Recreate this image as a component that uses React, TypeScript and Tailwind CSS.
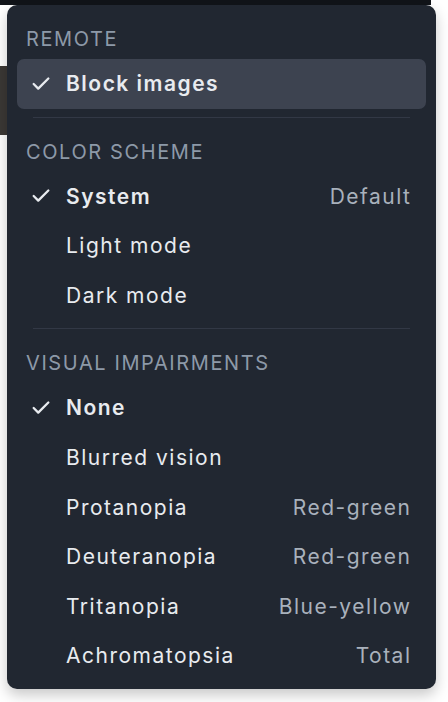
import { Check } from "lucide-react";

type Item = { label: string; hint?: string; checked?: boolean; active?: boolean };

const sections: { title: string; items: Item[] }[] = [
  {
    title: "Remote",
    items: [{ label: "Block images", checked: true, active: true }],
  },
  {
    title: "Color scheme",
    items: [
      { label: "System", hint: "Default", checked: true },
      { label: "Light mode" },
      { label: "Dark mode" },
    ],
  },
  {
    title: "Visual impairments",
    items: [
      { label: "None", checked: true },
      { label: "Blurred vision" },
      { label: "Protanopia", hint: "Red-green" },
      { label: "Deuteranopia", hint: "Red-green" },
      { label: "Tritanopia", hint: "Blue-yellow" },
      { label: "Achromatopsia", hint: "Total" },
    ],
  },
];

function MenuRow({ item }: { item: Item }) {
  return (
    <div
      className={`flex h-[49.6px] items-center rounded-[7px] pl-[13px] pr-4 ${
        item.active ? "bg-[#3d4350]" : ""
      }`}
    >
      <span className="flex w-[22px] justify-center text-[#e8ebef]">
        {item.checked && <Check size={22} strokeWidth={2.5} />}
      </span>
      <span
        className={`ml-[14px] flex-1 text-[21px] tracking-[1.5px] text-[#e8ebef] ${
          item.checked ? "font-semibold" : ""
        }`}
      >
        {item.label}
      </span>
      {item.hint && (
        <span className="-mr-[1.5px] text-[21px] tracking-[1.5px] text-[#a9b1bc]">
          {item.hint}
        </span>
      )}
    </div>
  );
}

export default function App() {
  return (
    <div className="relative h-[702px] w-[448px] overflow-hidden bg-white font-['Inter',sans-serif]">
      <div className="h-[5px] w-[431px] bg-[#111419]" />
      <div className="mt-[61px] h-[69px] w-[20px] bg-[#3b3835]" />

      <div className="absolute left-[7px] top-[5px] w-[429px] rounded-[10px] bg-[#212731] px-[10px] py-[8px] shadow-[0_6px_14px_rgba(0,0,0,0.22)]">
        {sections.map((section, i) => (
          <div key={section.title}>
            {i > 0 && <div className="mx-4 my-2 h-px bg-[#323845]" />}
            <p className="px-[9px] pt-[12px] pb-[6px] text-[20px] uppercase leading-[28px] tracking-[1.6px] text-[#8d99a8]">
              {section.title}
            </p>
            {section.items.map((item) => (
              <MenuRow key={item.label} item={item} />
            ))}
          </div>
        ))}
      </div>
    </div>
  );
}
